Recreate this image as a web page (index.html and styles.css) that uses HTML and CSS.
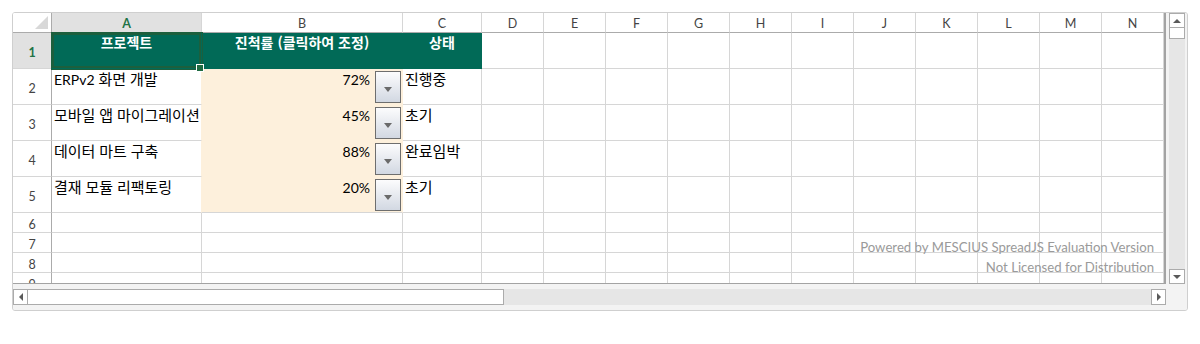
FILE: index.html
```html
<!DOCTYPE html>
<html lang="ko">
<head>
<meta charset="utf-8">
<title>SpreadJS</title>
<link rel="stylesheet" href="styles.css">
</head>
<body>
<div class="sheet">
  <div class="main">
    <div class="grid-wrap">
      <div class="grid">
        <div class="corner"></div>
        <div class="ch sel">A</div><div class="ch">B</div><div class="ch">C</div><div class="ch">D</div><div class="ch">E</div><div class="ch">F</div><div class="ch">G</div><div class="ch">H</div><div class="ch">I</div><div class="ch">J</div><div class="ch">K</div><div class="ch">L</div><div class="ch">M</div><div class="ch">N</div>

        <div class="rh sel">1</div>
        <div class="c hd active">프로젝트</div><div class="c hd">진척률 (클릭하여 조정)</div><div class="c hd">상태</div>
        <div class="c"></div><div class="c"></div><div class="c"></div><div class="c"></div><div class="c"></div><div class="c"></div><div class="c"></div><div class="c"></div><div class="c"></div><div class="c"></div><div class="c"></div>

        <div class="rh">2</div>
        <div class="c txt fillnext"><span class="latin">ERPv2</span> 화면 개발</div>
        <div class="c pct"><span>72%</span><span class="dd"></span></div>
        <div class="c txt">진행중</div>
        <div class="c"></div><div class="c"></div><div class="c"></div><div class="c"></div><div class="c"></div><div class="c"></div><div class="c"></div><div class="c"></div><div class="c"></div><div class="c"></div><div class="c"></div>

        <div class="rh">3</div>
        <div class="c txt fillnext">모바일 앱 마이그레이션</div>
        <div class="c pct"><span>45%</span><span class="dd"></span></div>
        <div class="c txt">초기</div>
        <div class="c"></div><div class="c"></div><div class="c"></div><div class="c"></div><div class="c"></div><div class="c"></div><div class="c"></div><div class="c"></div><div class="c"></div><div class="c"></div><div class="c"></div>

        <div class="rh">4</div>
        <div class="c txt fillnext">데이터 마트 구축</div>
        <div class="c pct"><span>88%</span><span class="dd"></span></div>
        <div class="c txt">완료임박</div>
        <div class="c"></div><div class="c"></div><div class="c"></div><div class="c"></div><div class="c"></div><div class="c"></div><div class="c"></div><div class="c"></div><div class="c"></div><div class="c"></div><div class="c"></div>

        <div class="rh">5</div>
        <div class="c txt fillnext">결재 모듈 리팩토링</div>
        <div class="c pct last"><span>20%</span><span class="dd"></span></div>
        <div class="c txt">초기</div>
        <div class="c"></div><div class="c"></div><div class="c"></div><div class="c"></div><div class="c"></div><div class="c"></div><div class="c"></div><div class="c"></div><div class="c"></div><div class="c"></div><div class="c"></div>

        <div class="rh">6</div>
        <div class="c"></div><div class="c"></div><div class="c"></div><div class="c"></div><div class="c"></div><div class="c"></div><div class="c"></div><div class="c"></div><div class="c"></div><div class="c"></div><div class="c"></div><div class="c"></div><div class="c"></div><div class="c"></div>

        <div class="rh">7</div>
        <div class="c"></div><div class="c"></div><div class="c"></div><div class="c"></div><div class="c"></div><div class="c"></div><div class="c"></div><div class="c"></div><div class="c"></div><div class="c"></div><div class="c"></div><div class="c"></div><div class="c"></div><div class="c"></div>

        <div class="rh">8</div>
        <div class="c"></div><div class="c"></div><div class="c"></div><div class="c"></div><div class="c"></div><div class="c"></div><div class="c"></div><div class="c"></div><div class="c"></div><div class="c"></div><div class="c"></div><div class="c"></div><div class="c"></div><div class="c"></div>

        <div class="rh">9</div>
        <div class="c"></div><div class="c"></div><div class="c"></div><div class="c"></div><div class="c"></div><div class="c"></div><div class="c"></div><div class="c"></div><div class="c"></div><div class="c"></div><div class="c"></div><div class="c"></div><div class="c"></div><div class="c"></div>
      </div>
      <div class="watermark">
        <div>Powered by MESCIUS SpreadJS Evaluation Version</div>
        <div>Not Licensed for Distribution</div>
      </div>
    </div>
    <div class="vscroll">
      <div class="sbtn up"><span class="tri-up"></span></div>
      <div class="vthumb"></div>
      <div class="vtrack"></div>
      <div class="sbtn down"><span class="tri-down"></span></div>
    </div>
  </div>
  <div class="hbar">
    <div class="hscroll">
      <div class="sbtn left"><span class="tri-left"></span></div>
      <div class="hthumb"></div>
      <div class="htrack"></div>
      <div class="sbtn right"><span class="tri-right"></span></div>
    </div>
  </div>
</div>
</body>
</html>
```

FILE: styles.css
```css
* { box-sizing: border-box; }

html, body {
  margin: 0;
  padding: 0;
  background: #ffffff;
}

.sheet {
  margin: 12px 0 0 12px;
  width: 1176px;
  height: 299px;
  border: 1px solid #cfcfcf;
  border-radius: 3px;
  background: #f3f3f3;
  display: flex;
  flex-direction: column;
  overflow: hidden;
}

.main {
  display: flex;
  height: 271px;
}

.grid-wrap {
  position: relative;
  width: 1153px;
  height: 271px;
  overflow: hidden;
  background: #ffffff;
  border-right: 2px solid #a3a3a3;
  border-bottom: 1px solid #a3a3a3;
}

.grid {
  display: grid;
  grid-template-columns: 39px 150px 201px 79px repeat(11, 62px);
  grid-template-rows: 20px repeat(5, 36px) repeat(4, 20px);
}

.grid > div {
  border-right: 1px solid #d6d6d6;
  border-bottom: 1px solid #d6d6d6;
  min-width: 0;
}

/* corner */
.grid > .corner {
  position: relative;
  background: #ffffff;
  border-right-color: #ababab;
  border-bottom-color: #ababab;
}
.corner::after {
  content: "";
  position: absolute;
  right: 3px;
  bottom: 3px;
  width: 13px;
  height: 13px;
  background: #d8d8d8;
  clip-path: polygon(100% 0, 100% 100%, 0 100%);
}

/* column headers */
.grid > .ch {
  display: flex;
  align-items: center;
  justify-content: center;
  padding-top: 1px;
  font-family: "Lato", "Liberation Sans", sans-serif;
  font-size: 12.5px;
  color: #444444;
  background: #ffffff;
  border-bottom-color: #ababab;
}
.grid > .ch.sel {
  background: #e1e1e1;
  color: #217346;
  font-weight: bold;
}

/* row headers */
.grid > .rh {
  display: flex;
  align-items: center;
  justify-content: center;
  padding-top: 3px;
  font-family: "Lato", "Liberation Sans", sans-serif;
  font-size: 12.5px;
  color: #444444;
  background: #ffffff;
  border-right-color: #ababab;
}
.grid > .rh.sel {
  background: #e1e1e1;
  color: #217346;
  font-weight: bold;
}

/* header data row */
.grid > .hd {
  background: #016a57;
  border-color: #016a57;
  color: #ffffff;
  font-family: "Noto Sans CJK KR", sans-serif;
  font-weight: bold;
  font-size: 14px;
  line-height: 18px;
  text-align: center;
  white-space: nowrap;
  overflow: hidden;
}
.grid > .hd.active {
  position: relative;
  overflow: visible;
  box-shadow: inset 0 0 0 2px #1c5f3d, 0 0 0 1px #1c5f3d;
}
.hd.active::after {
  content: "";
  position: absolute;
  right: -3px;
  bottom: -4px;
  width: 6px;
  height: 6px;
  background: #1f6b42;
  border: 1px solid #ffffff;
  z-index: 2;
}

/* text cells */
.grid > .txt {
  padding-left: 2px;
  font-family: "Lato", "Noto Sans CJK KR", sans-serif;
  font-size: 15px;
  line-height: 20px;
  color: #000000;
  white-space: nowrap;
  overflow: hidden;
}
.latin {
  font-size: 14px;
}
.grid > .fillnext {
  border-right-color: #fdf0dc;
}

/* percentage cells */
.grid > .pct {
  display: flex;
  justify-content: flex-end;
  align-items: flex-start;
  background: #fdf0dc;
  border-color: #fdf0dc;
  font-family: "Lato", "Liberation Sans", sans-serif;
  font-size: 14px;
  line-height: 21px;
  color: #000000;
}
.grid > .pct.last {
  border-bottom-color: #d6d6d6;
}
.dd {
  display: flex;
  align-items: center;
  justify-content: center;
  width: 26px;
  height: 32px;
  margin: 2px 1px 0 5px;
  border: 1px solid #6e6e6e;
  background: linear-gradient(#fcfcfd, #d2d8e2);
}
.dd::after {
  content: "";
  margin-top: 4px;
  border-left: 4px solid transparent;
  border-right: 4px solid transparent;
  border-top: 5px solid #6a6a6a;
}

/* watermark */
.watermark {
  position: absolute;
  right: 10px;
  top: 224px;
  text-align: right;
  font-family: "Lato", "Liberation Sans", sans-serif;
  font-size: 13.2px;
  line-height: 20px;
  color: #9a9a9a;
  white-space: nowrap;
  pointer-events: none;
}

/* vertical scrollbar */
.vscroll {
  width: 21px;
  display: flex;
  flex-direction: column;
  padding-left: 3px;
  padding-right: 2px;
  background: #f3f3f3;
}
.sbtn {
  display: flex;
  align-items: center;
  justify-content: center;
  width: 16px;
  height: 15px;
  background: #ffffff;
  border: 1px solid #ababab;
  flex: none;
}
.vthumb {
  width: 16px;
  height: 11px;
  background: #ffffff;
  border: 1px solid #ababab;
  border-top: none;
  flex: none;
}
.vtrack {
  flex: 1;
  width: 16px;
  background: #e6e6e6;
}
.tri-up {
  border-left: 4px solid transparent;
  border-right: 4px solid transparent;
  border-bottom: 4px solid #5a5a5a;
}
.tri-down {
  border-left: 4px solid transparent;
  border-right: 4px solid transparent;
  border-top: 4px solid #5a5a5a;
}
.tri-left {
  border-top: 4px solid transparent;
  border-bottom: 4px solid transparent;
  border-right: 4px solid #5a5a5a;
}
.tri-right {
  border-top: 4px solid transparent;
  border-bottom: 4px solid transparent;
  border-left: 4px solid #5a5a5a;
}

/* horizontal scrollbar */
.hbar {
  flex: 1;
  padding-top: 5px;
  background: #f3f3f3;
}
.hscroll {
  display: flex;
  width: 1153px;
  height: 16px;
}
.hscroll .sbtn {
  height: 16px;
  width: 15px;
}
.hthumb {
  width: 476px;
  height: 16px;
  background: #ffffff;
  border: 1px solid #ababab;
  border-left: none;
  flex: none;
}
.htrack {
  flex: 1;
  background: #e6e6e6;
}
```
